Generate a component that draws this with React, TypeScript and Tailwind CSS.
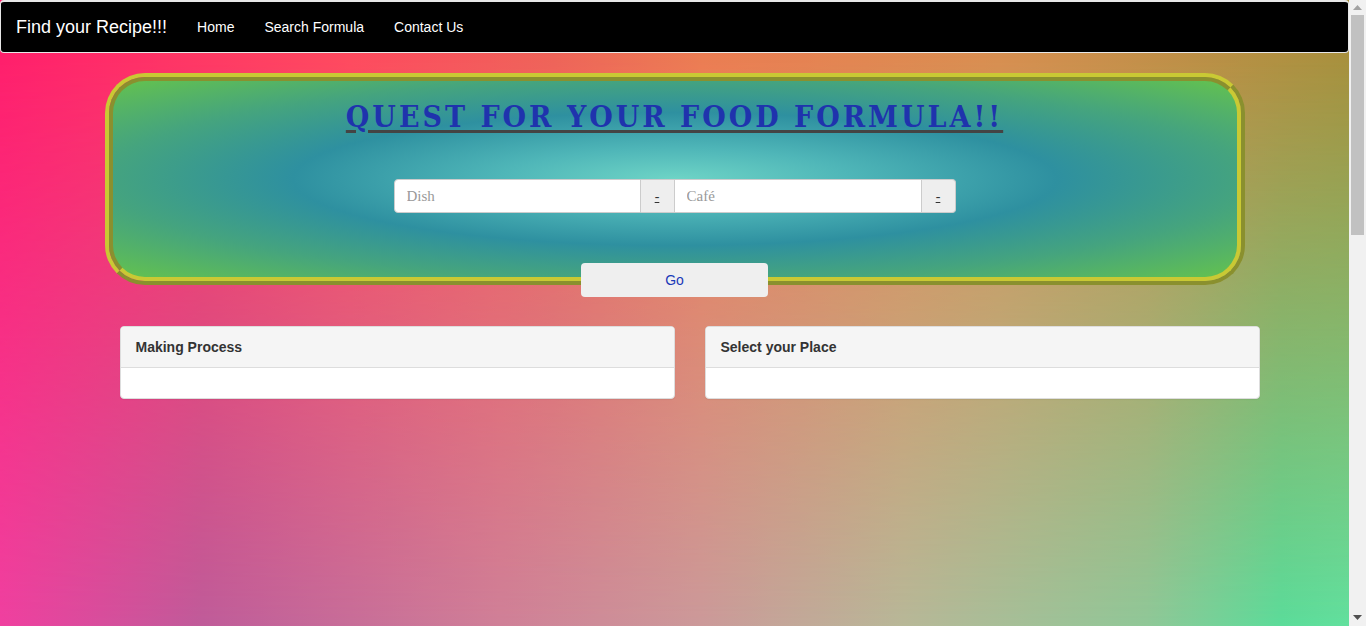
import React from "react";

function Scrollbar() {
  return (
    <div className="w-[17px] h-[626px] bg-[#f1f1f1] flex flex-col shrink-0">
      <div className="h-[15px] flex items-center justify-center">
        <svg width="9" height="5" viewBox="0 0 9 5">
          <polygon points="0,5 9,5 4.5,0" fill="#a3a3a3" />
        </svg>
      </div>
      <div className="mx-[2px] h-[220px] bg-[#c1c1c1]" />
      <div className="flex-1" />
      <div className="h-[17px] flex items-center justify-center">
        <svg width="9" height="5" viewBox="0 0 9 5">
          <polygon points="0,0 9,0 4.5,5" fill="#505050" />
        </svg>
      </div>
    </div>
  );
}

function Panel({ title }: { title: string }) {
  return (
    <div className="bg-white border border-[#dddddd] rounded-[4px] shadow-[0_1px_1px_rgba(0,0,0,0.05)] overflow-hidden">
      <div className="bg-[#f5f5f5] border-b border-[#dddddd] px-[15px] h-[41px] flex items-center text-[14px] font-bold text-[#333333] font-['Liberation_Sans',Arial,sans-serif]">
        {title}
      </div>
      <div className="h-[30px]" />
    </div>
  );
}

export default function App() {
  return (
    <div className="flex w-[1366px] h-[626px] overflow-hidden bg-white">
      <div className="relative w-[1349px] h-[626px] overflow-hidden bg-[linear-gradient(to_right,#f040a0_0%,#c05c9a_15%,#d08098_37%,#cc9a9a_52%,#b8b898_67%,#90c898_85%,#5cdc9a_95%,#62e09e_100%)] before:content-[''] before:absolute before:inset-0 before:bg-[linear-gradient(to_right,#ff1f6b_0%,#ff4a5e_26%,#ef6358_41%,#ec7c52_52%,#d88e50_74%,#a88f3c_100%)] before:[mask-image:linear-gradient(to_bottom,black_0%,black_8%,transparent_100%)]">
        <div className="relative z-10">
          <nav className="h-[53px] bg-black border border-t-2 border-[#e7e7e7] rounded-[4px] flex items-center font-['Liberation_Sans',Arial,sans-serif] text-white">
            <span className="px-[15px] text-[18px]">Find your Recipe!!!</span>
            <span className="px-[15px] text-[14px]">Home</span>
            <span className="px-[15px] text-[14px]">Search Formula</span>
            <span className="px-[15px] text-[14px]">Contact Us</span>
          </nav>
          <div className="w-[1170px] mx-auto">
            <div className="mx-[15px] mt-[20px] h-[212px] rounded-[40px] border-[4px] border-t-[#c9c934] border-l-[#c9c934] border-b-[#8a902e] border-r-[#8a902e]">
              <div className="h-[204px] rounded-[36px] border-[4px] border-t-[#8a902e] border-l-[#8a902e] border-b-[#c9c934] border-r-[#c9c934] bg-[radial-gradient(ellipse_at_center,#6ed4c6_0%,#4fb6b8_22%,#2e90a0_48%,#45a47e_72%,#64c24e_100%)] text-center">
                <h1 className="mt-[19px] leading-[33px] text-[30px] font-bold tracking-[3px] text-[#1f33ad] underline decoration-[#444444] decoration-[3px] underline-offset-[3px] font-['DejaVu_Serif_Condensed','Liberation_Serif',serif]">
                  QUEST FOR YOUR FOOD FORMULA!!
                </h1>
                <div className="mt-[46px] mx-auto w-[562px] h-[34px] flex font-['Liberation_Serif',Georgia,serif] text-[15px]">
                  <input
                    placeholder="Dish"
                    className="w-[247px] h-[34px] bg-white border border-[#cccccc] rounded-l-[4px] px-[12px] outline-none placeholder:text-[#999999] text-[#555555]"
                  />
                  <div className="w-[34px] h-[34px] bg-[#eeeeee] border border-l-0 border-[#cccccc] flex items-center justify-center text-[#333333] text-[14px] underline">
                    -
                  </div>
                  <input
                    placeholder="Café"
                    className="w-[247px] h-[34px] bg-white border border-l-0 border-[#cccccc] px-[12px] outline-none placeholder:text-[#999999] text-[#555555]"
                  />
                  <div className="w-[34px] h-[34px] bg-[#eeeeee] border border-l-0 border-[#cccccc] rounded-r-[4px] flex items-center justify-center text-[#333333] text-[14px] underline">
                    -
                  </div>
                </div>
                <button className="mt-[50px] mx-auto w-[187px] h-[34px] bg-[#efefef] rounded-[4px] flex items-center justify-center text-[14px] text-[#1a3ab8] font-['Liberation_Sans',Arial,sans-serif]">
                  Go
                </button>
              </div>
            </div>
            <div className="mt-[41px] pl-[30px] grid grid-cols-2 gap-[30px]">
              <Panel title="Making Process" />
              <Panel title="Select your Place" />
            </div>
          </div>
        </div>
      </div>
      <Scrollbar />
    </div>
  );
}
